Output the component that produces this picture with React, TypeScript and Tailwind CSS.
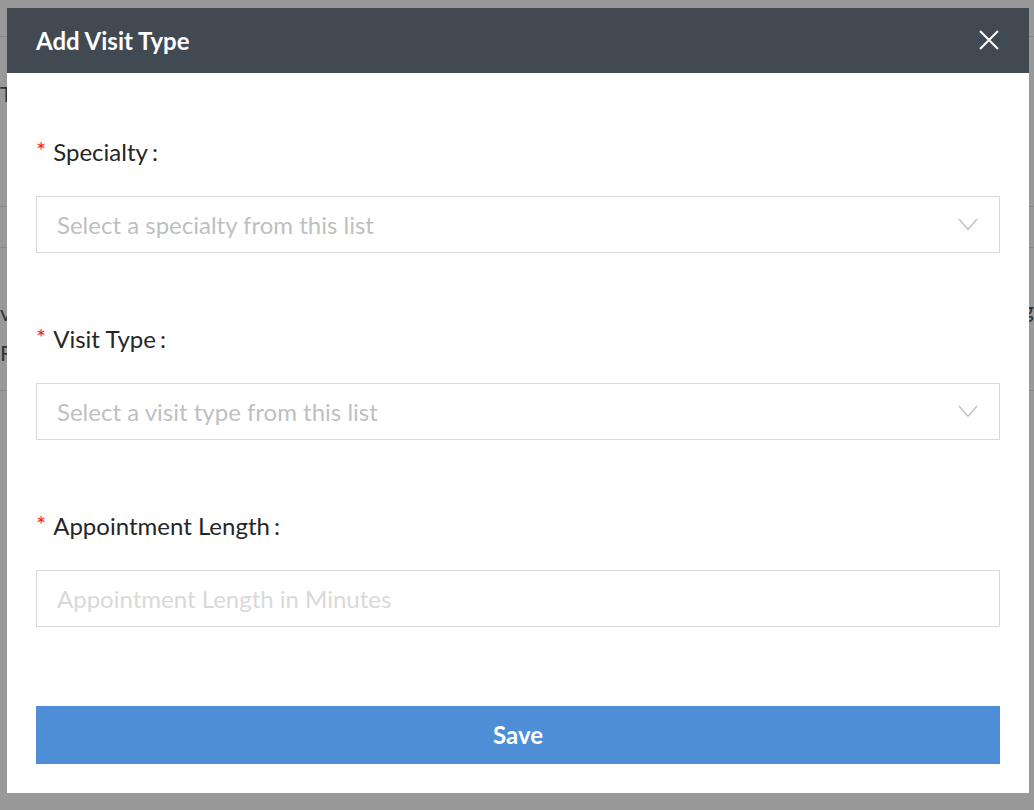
import React from "react";

const font = { fontFamily: "Lato, 'Noto Sans', sans-serif" };

function Chevron() {
  return (
    <svg width="20" height="13" viewBox="0 0 20 13" fill="none" className="shrink-0">
      <path d="M1 1 L10 11.5 L19 1" stroke="#bfbfbf" strokeWidth="1.4" />
    </svg>
  );
}

function Label({ text }: { text: string }) {
  return (
    <div className="flex h-[30px] items-center text-[24px] text-[#262626]">
      <span className="mr-[7px] mt-[-4px] text-[24px] leading-none text-[#f5222d]">*</span>
      <span>{text}</span>
      <span className="ml-[4px]">:</span>
    </div>
  );
}

function SelectBox({ placeholder }: { placeholder: string }) {
  return (
    <div className="mt-[29px] flex h-[57px] items-center justify-between border border-[#d9d9d9] bg-white pl-[20px] pr-[21px]">
      <span className="text-[24px] text-[#bfbfbf]">{placeholder}</span>
      <Chevron />
    </div>
  );
}

export default function App() {
  return (
    <div className="relative h-[810px] w-full overflow-hidden bg-white" style={font}>
      {/* page behind the dialog */}
      <div className="flex flex-col text-[22px] text-[#555]">
        <div className="h-[37px] border-b border-[#e5e5e5]" />
        <div className="flex h-[170px] items-start justify-between border-b border-[#e5e5e5] pt-[40px]">
          <span>T</span>
        </div>
        <div className="h-[41px] border-b border-[#e5e5e5]" />
        <div className="flex h-[143px] justify-between border-b border-[#e5e5e5] pt-[45px]">
          <div className="flex flex-col leading-[40px]">
            <span>v</span>
            <span>R</span>
          </div>
          <span>g</span>
        </div>
      </div>
      <div className="absolute inset-0 bg-black/40" />

      {/* dialog */}
      <div className="absolute left-[7px] top-[8px] flex h-[785px] w-[1022px] flex-col bg-white">
        <div className="flex h-[65px] items-center justify-between bg-[#414953] pl-[29px] pr-[30px]">
          <span className="text-[24px] font-bold text-white">Add Visit Type</span>
          <svg width="20" height="20" viewBox="0 0 20 20" className="mt-[-2px]">
            <path d="M1 1 L19 19 M19 1 L1 19" stroke="white" strokeWidth="2" />
          </svg>
        </div>
        <div className="flex flex-col px-[29px] pt-[64px]">
          <Label text="Specialty" />
          <SelectBox placeholder="Select a specialty from this list" />
          <div className="mt-[71px]">
            <Label text="Visit Type" />
          </div>
          <SelectBox placeholder="Select a visit type from this list" />
          <div className="mt-[71px]">
            <Label text="Appointment Length" />
          </div>
          <div className="mt-[29px] flex h-[57px] items-center border border-[#d9d9d9] bg-white pl-[20px]">
            <span className="text-[24px] text-[#d9d9d9]">Appointment Length in Minutes</span>
          </div>
          <button className="mt-[79px] flex h-[58px] items-center justify-center bg-[#4e8ed6] text-[24px] font-bold text-white">
            Save
          </button>
        </div>
      </div>
    </div>
  );
}
